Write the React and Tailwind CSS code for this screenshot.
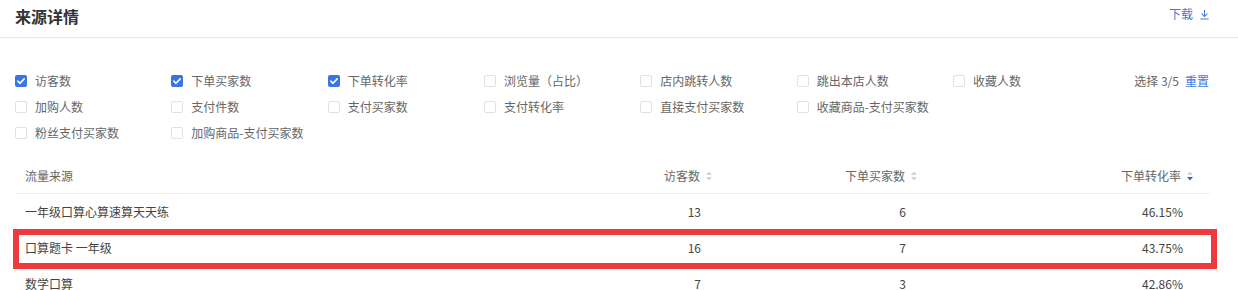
const metrics = [
  { label: "访客数", checked: true },
  { label: "下单买家数", checked: true },
  { label: "下单转化率", checked: true },
  { label: "浏览量（占比）", checked: false },
  { label: "店内跳转人数", checked: false },
  { label: "跳出本店人数", checked: false },
  { label: "收藏人数", checked: false },
  { label: "加购人数", checked: false },
  { label: "支付件数", checked: false },
  { label: "支付买家数", checked: false },
  { label: "支付转化率", checked: false },
  { label: "直接支付买家数", checked: false },
  { label: "收藏商品-支付买家数", checked: false },
  { label: "", checked: null },
  { label: "粉丝支付买家数", checked: false },
  { label: "加购商品-支付买家数", checked: false },
];

const rows = [
  { source: "一年级口算心算速算天天练", visitors: 13, buyers: 6, rate: "46.15%" },
  { source: "口算题卡 一年级", visitors: 16, buyers: 7, rate: "43.75%" },
  { source: "数学口算", visitors: 7, buyers: 3, rate: "42.86%" },
];

function Checkbox({ checked }) {
  if (checked) {
    return (
      <span className="flex h-[12px] w-[12px] shrink-0 items-center justify-center rounded-[2px] bg-[#3a74e6]">
        <svg viewBox="0 0 12 12" className="h-[12px] w-[12px]">
          <path d="M2.8 6.2 L5 8.3 L9.2 3.9" fill="none" stroke="#fff" strokeWidth="1.6" strokeLinecap="round" strokeLinejoin="round" />
        </svg>
      </span>
    );
  }
  return <span className="h-[12px] w-[12px] shrink-0 rounded-[2px] border border-[#e2e2e2] bg-white" />;
}

function SortIcon({ active }) {
  return (
    <svg viewBox="0 0 6 10" className="ml-[6px] h-[10px] w-[6px] shrink-0">
      <path d="M3 0.5 L6 4 L0 4 Z" fill="#d4d4d4" />
      <path d="M0 6 L6 6 L3 9.5 Z" fill={active ? "#3668c9" : "#d4d4d4"} />
    </svg>
  );
}

export default function App() {
  return (
    <div
      className="h-[290px] w-[1238px] overflow-hidden bg-white text-[12px] text-[#555]"
      style={{ fontFamily: '"Noto Sans CJK SC", "Microsoft YaHei", sans-serif' }}
    >
      <div className="flex h-[38px] items-start justify-between border-b border-[#e8e8e8] pl-[15px] pr-[28px]">
        <h2 className="pt-[4px] text-[16px] font-bold leading-[24px] text-[#333]">来源详情</h2>
        <button type="button" className="flex items-center pt-[5px] leading-[18px] text-[#4a78d4]">
          下载
          <svg viewBox="0 0 12 12" className="ml-[6px] h-[11px] w-[11px]">
            <path d="M6 1 V8 M2.8 5 L6 8.2 L9.2 5 M1.5 10.8 H10.5" fill="none" stroke="#4a78d4" strokeWidth="1.1" />
          </svg>
        </button>
      </div>

      <div className="flex pl-[15px] pr-[29px] pt-[30px]">
        <div className="grid grid-cols-[repeat(7,156.33px)]">
          {metrics.map((m, i) =>
            m.checked === null ? (
              <div key={i} className="h-[26px]" />
            ) : (
              <label key={i} className="flex h-[26px] items-center gap-[8px] text-[#666]">
                <Checkbox checked={m.checked} />
                <span className="whitespace-nowrap">{m.label}</span>
              </label>
            )
          )}
        </div>
        <div className="flex h-[26px] flex-1 items-center justify-end whitespace-nowrap text-[#666]">
          选择 3/5
          <span className="ml-[6px] text-[#3b7be0]">重置</span>
        </div>
      </div>

      <div className="relative mt-[12px] pl-[15px]">
        <div className="w-[1195px]">
          <div className="grid h-[36px] grid-cols-[505px_197px_205px_288px] items-center border-b border-[#efefef] text-[#666]">
            <div className="pl-[10px]">流量来源</div>
            <div className="flex items-center justify-end pr-[5px]">
              访客数
              <SortIcon />
            </div>
            <div className="flex items-center justify-end pr-[5px]">
              下单买家数
              <SortIcon />
            </div>
            <div className="flex items-center justify-end pr-[17px]">
              下单转化率
              <SortIcon active />
            </div>
          </div>
          {rows.map((r) => (
            <div
              key={r.source}
              className="grid h-[36px] grid-cols-[505px_197px_205px_288px] items-center border-b border-[#f5f5f5] text-[#444]"
            >
              <div className="pl-[10px]">{r.source}</div>
              <div className="pr-[16px] text-right">{r.visitors}</div>
              <div className="pr-[16px] text-right">{r.buyers}</div>
              <div className="pr-[27px] text-right">{r.rate}</div>
            </div>
          ))}
        </div>
        <div className="pointer-events-none absolute left-[13px] top-[71px] h-[40px] w-[1204px] border-[6px] border-[#ee3a3d]" />
      </div>
    </div>
  );
}
